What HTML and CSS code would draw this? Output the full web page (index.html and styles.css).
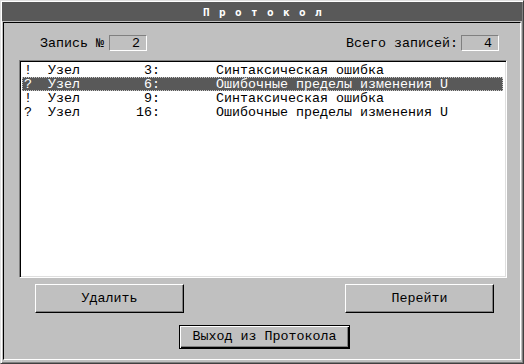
FILE: index.html
```html
<!DOCTYPE html>
<html lang="ru">
<head>
<meta charset="utf-8">
<title>Протокол</title>
<link rel="stylesheet" href="styles.css">
</head>
<body>
<div class="window">
  <div class="titlebar"><span class="title">П р о т о к о л</span></div>
  <div class="panel">
    <div class="header">
      <div class="field">
        <span class="label">Запись №</span>
        <span class="value">2</span>
      </div>
      <div class="field field-right">
        <span class="label">Всего записей:</span>
        <span class="value">4</span>
      </div>
    </div>
    <div class="list">
      <div class="row">!  Узел        3:       Синтаксическая ошибка</div>
      <div class="row selected">?  Узел        6:       Ошибочные пределы изменения U</div>
      <div class="row">!  Узел        9:       Синтаксическая ошибка</div>
      <div class="row">?  Узел       16:       Ошибочные пределы изменения U</div>
    </div>
    <div class="actions">
      <button class="btn">Удалить</button>
      <button class="btn">Перейти</button>
    </div>
    <div class="exit-row">
      <button class="btn btn-default">Выход из Протокола</button>
    </div>
  </div>
</div>
</body>
</html>
```
FILE: styles.css
```css
* { box-sizing: border-box; }
html, body { margin: 0; padding: 0; background: #c0c0c0; }
body {
  font-family: "Liberation Mono", "Courier New", monospace;
  font-size: 13.33px;
  color: #000;
}
.window {
  width: 524px;
  height: 364px;
  background: #c0c0c0;
  border: 1px solid;
  border-color: #dfdfdf #404040 #404040 #dfdfdf;
  box-shadow: inset 1px 1px #fff, inset -1px -1px #808080;
  padding: 1px;
  display: flex;
  flex-direction: column;
}
.titlebar {
  height: 19px;
  background: #595959;
  color: #fff;
  display: flex;
  align-items: center;
  justify-content: center;
  padding-left: 2px;
}
.title {
  font-family: "DejaVu Sans Mono", monospace;
  font-weight: bold;
  font-size: 11px;
  letter-spacing: 1.38px;
  white-space: pre;
  line-height: 19px;
  padding-top: 1px;
}
.panel {
  flex: 1;
  margin: 1px 1px 2px 1px;
  border: 1px solid;
  border-color: #000 #fff #fff #000;
  display: flex;
  flex-direction: column;
}
.header {
  margin-top: 12px;
  height: 16px;
  display: flex;
  justify-content: space-between;
  padding: 0 21px 0 36px;
}
.field {
  display: flex;
  align-items: center;
  gap: 5px;
}
.field-right { gap: 3px; }
.label {
  white-space: pre;
  line-height: 16px;
  padding-top: 1px;
}
.value {
  width: 38px;
  height: 16px;
  border: 1px solid;
  border-color: #808080 #fff #fff #808080;
  text-align: right;
  padding-right: 6px;
  line-height: 14px;
  padding-top: 1px;
}
.list {
  margin: 9px 13px 0 15px;
  height: 218px;
  background: #fff;
  border: 1px solid;
  border-color: #808080 #fff #fff #808080;
  box-shadow: inset 1px 1px #000, inset -1px -1px #dfdfdf;
  padding: 2px 3px 2px 2px;
}
.row {
  height: 14px;
  line-height: 12px;
  padding: 2px 0 0 2px;
  white-space: pre;
  color: #000;
}
.row.selected {
  background: #595959;
  color: #fff;
  outline: 1px dotted #c8c8c8;
  outline-offset: -1px;
}
.actions {
  margin-top: 6px;
  display: flex;
  justify-content: space-between;
  padding: 0 26px 0 31px;
}
.btn {
  font: inherit;
  color: #000;
  background: #c0c0c0;
  width: 149px;
  height: 29px;
  padding: 0;
  border: 1px solid;
  border-color: #fff #000 #000 #fff;
  box-shadow: inset -1px -1px #808080;
  white-space: pre;
  line-height: 14px;
}
.exit-row {
  margin-top: 12px;
  display: flex;
  padding-left: 175px;
}
.btn-default {
  width: 171px;
  height: 24px;
  border: 1px solid #000;
  box-shadow: inset 1px 1px #fff, inset -1px -1px #000, inset -2px -2px #808080;
}
```
